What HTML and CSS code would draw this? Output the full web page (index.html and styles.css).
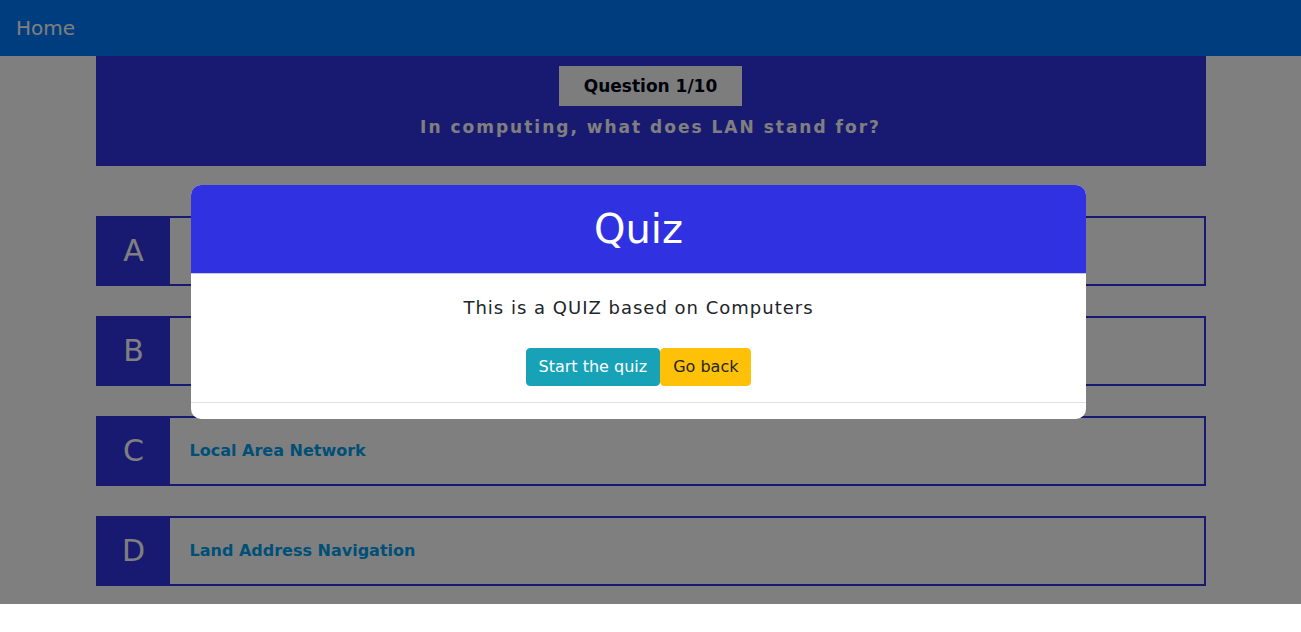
FILE: index.html
```
<!DOCTYPE html>
<html lang="en">
<head>
<meta charset="utf-8">
<meta name="viewport" content="width=device-width, initial-scale=1">
<title>Quiz</title>
<link rel="stylesheet" href="styles.css">
</head>
<body>
<div class="page">
  <nav class="navbar"><a class="navbar-brand" href="#">Home</a></nav>
  <main class="quiz">
    <header class="question">
      <div class="question-count">Question 1/10</div>
      <h2 class="question-text">In computing, what does LAN stand for?</h2>
    </header>
    <div class="options">
      <button class="option" type="button"><span class="option-letter">A</span><span class="option-text"></span></button>
      <button class="option" type="button"><span class="option-letter">B</span><span class="option-text"></span></button>
      <button class="option" type="button"><span class="option-letter">C</span><span class="option-text">Local Area Network</span></button>
      <button class="option" type="button"><span class="option-letter">D</span><span class="option-text">Land Address Navigation</span></button>
    </div>
  </main>
  <div class="backdrop">
    <section class="modal" role="dialog" aria-modal="true" aria-labelledby="modal-title">
      <header class="modal-header"><h1 class="modal-title" id="modal-title">Quiz</h1></header>
      <div class="modal-body">
        <p class="modal-text">This is a QUIZ based on Computers</p>
        <div class="modal-actions">
          <button class="btn btn-info" type="button">Start the quiz</button>
          <button class="btn btn-warning" type="button">Go back</button>
        </div>
      </div>
      <footer class="modal-footer"></footer>
    </section>
  </div>
</div>
</body>
</html>
```
FILE: styles.css
```
* {
  box-sizing: border-box;
}

body {
  margin: 0;
  background: #fff;
  color: #212529;
  font: 16px/24px "DejaVu Sans", sans-serif;
}

h1, h2, p {
  margin: 0;
}

button {
  font: inherit;
  cursor: pointer;
}

.page {
  position: relative;
  padding-bottom: 18px;
}

.navbar {
  padding: 13px 16px;
  background: #007bff;
}

.navbar-brand {
  display: inline-block;
  color: #fff;
  font-size: 20px;
  line-height: 30px;
  text-decoration: none;
  vertical-align: top;
}

.quiz {
  max-width: 1110px;
  margin: 0 auto;
}

.question {
  display: flex;
  flex-direction: column;
  align-items: center;
  gap: 8px;
  padding: 10px 16px 26px;
  background: #3032e2;
  text-align: center;
}

.question-count {
  padding: 8px 25px;
  background: #f8faf8;
  color: #000716;
  font-size: 17px;
  font-weight: bold;
}

.question-text {
  color: #fff;
  font-size: 17px;
  line-height: 26px;
  letter-spacing: 2px;
}

.options {
  display: flex;
  flex-direction: column;
  gap: 30px;
  padding-top: 50px;
}

.option {
  display: flex;
  align-items: stretch;
  min-height: 70px;
  padding: 0;
  border: 2px solid #3032e2;
  background: #fff;
  text-align: left;
}

.option-letter {
  display: flex;
  align-items: center;
  justify-content: center;
  flex: 0 0 72px;
  background: #3032e2;
  color: #fff;
  font-size: 30px;
}

.option-text {
  align-self: center;
  padding: 0 20px;
  color: #009fee;
  font-weight: bold;
}

.backdrop {
  position: absolute;
  inset: 0;
  display: flex;
  align-items: center;
  justify-content: center;
  padding-right: 24px;
  background: rgba(0, 0, 0, 0.5);
}

.modal {
  width: 90%;
  max-width: 895px;
  overflow: hidden;
  border-radius: 10px;
  background: #fff;
  text-align: center;
}

.modal-header {
  padding: 20px 16px;
  border-bottom: 1px solid #c8c9e8;
  background: #3032e2;
  color: #fff;
}

.modal-title {
  font-size: 40px;
  font-weight: normal;
  line-height: 48px;
}

.modal-body {
  padding: 16px;
}

.modal-text {
  padding-bottom: 22px;
  font-size: 18px;
  line-height: 36px;
  letter-spacing: 1px;
}

.modal-actions {
  display: flex;
  justify-content: center;
}

.btn {
  padding: 6px 12px;
  border: 1px solid transparent;
  border-radius: 4px;
}

.btn-info {
  border-color: #17a2b8;
  background: #17a2b8;
  color: #fff;
}

.btn-warning {
  border-color: #ffc107;
  background: #ffc107;
  color: #212529;
}

.modal-footer {
  height: 17px;
  border-top: 1px solid #dee2e6;
}
```
